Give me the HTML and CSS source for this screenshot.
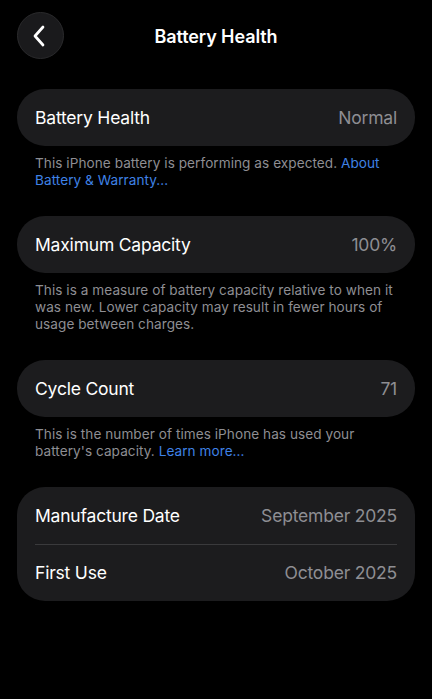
FILE: index.html
```html
<!DOCTYPE html>
<html lang="en">
<head>
  <meta charset="UTF-8" />
  <title>Battery Health</title>
  <link rel="stylesheet" href="styles.css">
</head>
<body>
  <header class="nav">
    <button class="back" aria-label="Back">
      <svg width="14" height="22" viewBox="0 0 14 22">
        <path d="M11 2 L3 11 L11 20" fill="none" stroke="#fff" stroke-width="2.7" stroke-linecap="round" stroke-linejoin="round"/>
      </svg>
    </button>
    <h1>Battery Health</h1>
  </header>

  <section class="group">
    <div class="card">
      <div class="row"><span class="label">Battery Health</span><span class="value">Normal</span></div>
    </div>
    <p class="note">This iPhone battery is performing as expected. <a href="#">About Battery &amp; Warranty...</a></p>
  </section>

  <section class="group">
    <div class="card">
      <div class="row"><span class="label">Maximum Capacity</span><span class="value">100%</span></div>
    </div>
    <p class="note">This is a measure of battery capacity relative to when it was new. Lower capacity may result in fewer hours of usage between charges.</p>
  </section>

  <section class="group">
    <div class="card">
      <div class="row"><span class="label">Cycle Count</span><span class="value">71</span></div>
    </div>
    <p class="note">This is the number of times iPhone has used your battery's capacity. <a href="#">Learn more...</a></p>
  </section>

  <section class="group">
    <div class="card">
      <div class="row"><span class="label">Manufacture Date</span><span class="value">September 2025</span></div>
      <div class="row"><span class="label">First Use</span><span class="value">October 2025</span></div>
    </div>
  </section>
</body>
</html>
```

FILE: styles.css
```css
:root {
  --bg: #000;
  --card: #1c1c1e;
  --text: #fff;
  --muted: #8e8e93;
  --link: #3f82e6;
  --sep: #3a3a3c;
}

body {
  margin: 0;
  padding: 0 17px;
  background: var(--bg);
  color: var(--text);
  font-family: Inter, "Noto Sans", sans-serif;
}

/* top bar */
.nav {
  position: relative;
  display: flex;
  align-items: center;
  justify-content: center;
  padding-top: 12px;
  height: 48px;
  margin-bottom: 29px;
}
.nav h1 {
  margin: 0;
  font-size: 18px;
  font-weight: 600;
  letter-spacing: -0.1px;
}
.back {
  position: absolute;
  left: 0;
  top: 12px;
  width: 47px;
  height: 47px;
  border-radius: 50%;
  border: 1px solid #2a2a2c;
  background: #1a1a1c;
  display: flex;
  align-items: center;
  justify-content: center;
  padding: 0 3px 0 0;
  cursor: pointer;
}

.group {
  margin-bottom: 27.5px;
}

.card {
  background: var(--card);
  border-radius: 28px;
  padding: 0 18px;
}

.row {
  display: flex;
  justify-content: space-between;
  align-items: center;
  height: 56.5px;
  font-size: 17.5px;
  letter-spacing: -0.2px;
}
.row + .row {
  border-top: 1px solid var(--sep);
  height: 56px;
}
.value {
  color: var(--muted);
}

.note {
  margin: 9px 18px 0;
  font-size: 13.6px;
  line-height: 17px;
  letter-spacing: 0.05px;
  color: var(--muted);
}
.note a {
  color: var(--link);
  text-decoration: none;
}
```
